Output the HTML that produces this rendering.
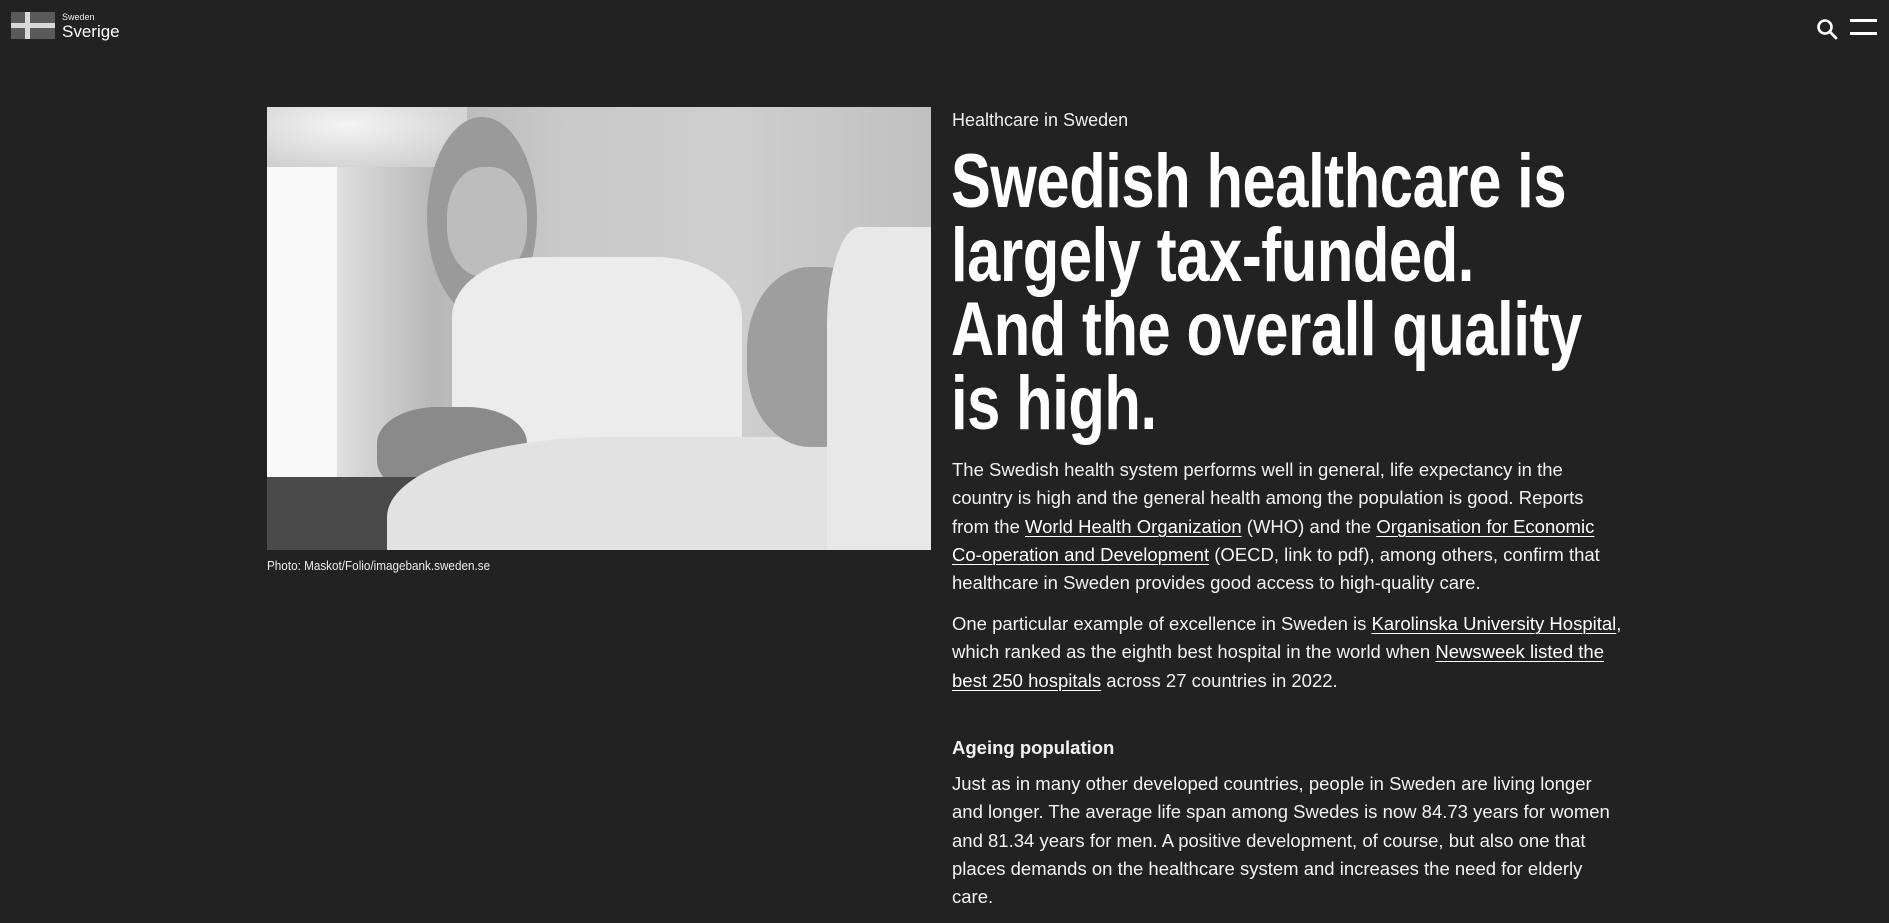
<!DOCTYPE html>
<html><head><meta charset="utf-8">
<style>
*{margin:0;padding:0;box-sizing:border-box}
html,body{width:1889px;height:923px;overflow:hidden;background:#222;color:#fff;font-family:"Liberation Sans",sans-serif}
.abs{position:absolute}
a{color:#fff;text-decoration:underline;text-underline-offset:3px;text-decoration-thickness:1px}
.h1 div{white-space:nowrap;transform:scaleX(0.785);transform-origin:left top;font-weight:bold;font-size:76px;line-height:74px;letter-spacing:-0.5px;height:74px}
.body{font-size:18.5px;line-height:28.3px;white-space:nowrap;color:#f2f2f2}
</style></head><body>
<!-- logo -->
<div class="abs" style="left:11px;top:12px;width:44px;height:27px;background:#5a5a5a"></div>
<div class="abs" style="left:11px;top:23px;width:44px;height:5px;background:#d8d8d8"></div>
<div class="abs" style="left:25px;top:12px;width:5px;height:27px;background:#d8d8d8"></div>
<div class="abs" style="left:62px;top:12px;font-size:9px;color:#eee">Sweden</div>
<div class="abs" style="left:62px;top:22px;font-size:17px;color:#fff">Sverige</div>
<!-- icons -->
<svg class="abs" style="left:1815px;top:17px" width="24" height="24" viewBox="0 0 24 24"><circle cx="10" cy="10" r="6.5" fill="none" stroke="#fff" stroke-width="2.6"/><line x1="14.8" y1="14.8" x2="21" y2="21" stroke="#fff" stroke-width="2.8" stroke-linecap="round"/></svg>
<div class="abs" style="left:1850px;top:19px;width:27px;height:3px;background:#fff"></div>
<div class="abs" style="left:1850px;top:32px;width:27px;height:3px;background:#fff"></div>
<!-- image -->
<div class="abs" style="left:267px;top:107px;width:664px;height:443px;overflow:hidden;background:linear-gradient(90deg,#f0f0f0 0%,#e6e6e6 8%,#b8b8b8 25%,#c9c9c9 45%,#cfcfcf 70%,#c0c0c0 100%)">
  <div class="abs" style="left:0;top:60px;width:70px;height:360px;background:#f8f8f8"></div>
  <div class="abs" style="left:0;top:0;width:200px;height:60px;background:radial-gradient(ellipse at 40% 30%,#f4f4f4,#d0d0d0 80%)"></div>
  <div class="abs" style="left:160px;top:10px;width:110px;height:200px;border-radius:50%;background:#9a9a9a"></div>
  <div class="abs" style="left:180px;top:60px;width:80px;height:110px;border-radius:45%;background:#bdbdbd"></div>
  <div class="abs" style="left:185px;top:150px;width:290px;height:200px;border-radius:30% 30% 10% 10%;background:#ececec"></div>
  <div class="abs" style="left:110px;top:300px;width:150px;height:90px;border-radius:40%;background:#8a8a8a"></div>
  <div class="abs" style="left:0;top:370px;width:664px;height:73px;background:#4a4a4a"></div>
  <div class="abs" style="left:120px;top:330px;width:560px;height:200px;border-radius:40% 20% 0 0;background:#e2e2e2"></div>
  <div class="abs" style="left:480px;top:160px;width:140px;height:180px;border-radius:45%;background:#9e9e9e"></div>
  <div class="abs" style="left:560px;top:120px;width:110px;height:330px;background:#e8e8e8;border-radius:30% 0 0 0"></div>
</div>
<div class="abs" style="left:267px;top:558px;font-size:13px;color:#eee;transform:scaleX(0.9);transform-origin:left">Photo: Maskot/Folio/imagebank.sweden.se</div>
<!-- text column -->
<div class="abs" style="left:952px;top:110px;font-size:18px;color:#eee">Healthcare in Sweden</div>
<div class="abs h1" style="left:951px;top:145px">
<div>Swedish healthcare is</div>
<div>largely tax-funded.</div>
<div>And the overall quality</div>
<div>is high.</div>
</div>
<div class="abs body" style="left:952px;top:456px">The Swedish health system performs well in general, life expectancy in the<br>country is high and the general health among the population is good. Reports<br>from the <a>World Health Organization</a> (WHO) and the <a>Organisation for Economic</a><br><a>Co-operation and Development</a> (OECD, link to pdf), among others, confirm that<br>healthcare in Sweden provides good access to high-quality care.</div>
<div class="abs body" style="left:952px;top:610px">One particular example of excellence in Sweden is <a>Karolinska University Hospital</a>,<br>which ranked as the eighth best hospital in the world when <a>Newsweek listed the</a><br><a>best 250 hospitals</a> across 27 countries in 2022.</div>
<div class="abs body" style="left:952px;top:734px;font-weight:bold">Ageing population</div>
<div class="abs body" style="left:952px;top:770px">Just as in many other developed countries, people in Sweden are living longer<br>and longer. The average life span among Swedes is now 84.73 years for women<br>and 81.34 years for men. A positive development, of course, but also one that<br>places demands on the healthcare system and increases the need for elderly<br>care.</div>
</body></html>
